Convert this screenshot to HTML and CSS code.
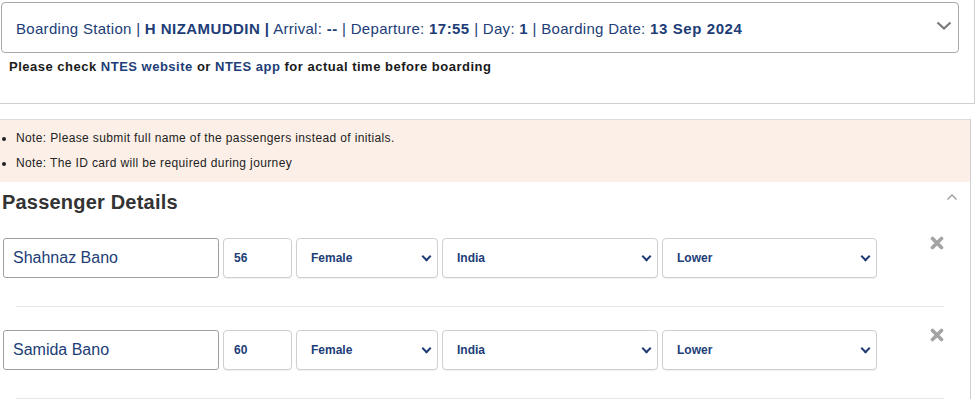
FILE: index.html
```html
<!DOCTYPE html>
<html>
<head>
<meta charset="utf-8">
<link rel="stylesheet" href="styles.css">
</head>
<body>
<div class="top">
  <div class="station-box">
    <div class="station-text">Boarding Station | <b>H NIZAMUDDIN |</b> Arrival: <b>--</b> | Departure: <b>17:55</b> | Day: <b>1</b> | Boarding Date: <b class="date">13 Sep 2024</b></div>
    <svg class="chev-down" width="16" height="10" viewBox="0 0 16 10"><path d="M1.5 1.5 L8 7.5 L14.5 1.5" fill="none" stroke="#7a7a7a" stroke-width="2.2"/></svg>
  </div>
  <div class="ntes">Please check <span class="link">NTES website</span> or <span class="link">NTES app</span> for actual time before boarding</div>
</div>

<div class="lower">
  <ul class="notes">
    <li>Note: Please submit full name of the passengers instead of initials.</li>
    <li>Note: The ID card will be required during journey</li>
  </ul>

  <div class="pd-head">
    <h2>Passenger Details</h2>
    <svg class="chev-up" width="12" height="8" viewBox="0 0 12 8"><path d="M1.5 6.5 L6 2 L10.5 6.5" fill="none" stroke="#9a9a9a" stroke-width="1.4"/></svg>
  </div>

  <div class="passenger">
    <div class="row">
      <input class="field name" value="Shahnaz Bano">
      <input class="field age" value="56">
      <div class="sel gender"><select class="field"><option>Female</option></select></div>
      <div class="sel nation"><select class="field"><option>India</option></select></div>
      <div class="sel berth"><select class="field"><option>Lower</option></select></div>
      <svg class="remove" width="14" height="14" viewBox="0 0 14 14"><path d="M2.5 2.5 L11.5 11.5 M11.5 2.5 L2.5 11.5" stroke="#a3a3a3" stroke-width="3.6" stroke-linecap="round"/></svg>
    </div>
    <div class="sep"></div>
  </div>

  <div class="passenger">
    <div class="row">
      <input class="field name" value="Samida Bano">
      <input class="field age" value="60">
      <div class="sel gender"><select class="field"><option>Female</option></select></div>
      <div class="sel nation"><select class="field"><option>India</option></select></div>
      <div class="sel berth"><select class="field"><option>Lower</option></select></div>
      <svg class="remove" width="14" height="14" viewBox="0 0 14 14"><path d="M2.5 2.5 L11.5 11.5 M11.5 2.5 L2.5 11.5" stroke="#a3a3a3" stroke-width="3.6" stroke-linecap="round"/></svg>
    </div>
    <div class="sep"></div>
  </div>
</div>
</body>
</html>
```
FILE: styles.css
```css
* { box-sizing: border-box; }
body {
  margin: 0;
  font-family: "Liberation Sans", Arial, sans-serif;
  background: #fff;
  color: #222;
}
.top {
  width: 975px;
  height: 104px;
  padding: 2px 15px 0 1px;
  border-right: 1px solid #cfcfcf;
  border-bottom: 1px solid #cfcfcf;
}
.station-box {
  height: 51px;
  border: 1px solid #a8a8a8;
  border-radius: 4px;
  display: flex;
  align-items: center;
  justify-content: space-between;
  padding: 0 6px 0 14px;
}
.station-text {
  font-size: 15px;
  letter-spacing: 0.3px;
  color: #213d77;
  padding-top: 1px;
}
.station-text b { font-weight: bold; letter-spacing: 0.45px; }
.station-text .date { letter-spacing: 0.6px; }
.chev-down { margin-top: -3px; }
.ntes {
  margin-top: 6px;
  padding-left: 8px;
  font-size: 13px;
  font-weight: bold;
  color: #1a1a1a;
  letter-spacing: 0.5px;
}
.ntes .link { color: #213d77; }

.lower {
  width: 971px;
  margin-top: 15px;
  border-right: 1px solid #cfcfcf;
}
.notes {
  margin: 0;
  padding: 6px 0 6px 16px;
  background: #fcefe7;
  border-top: 1px solid #dcdcdc;
  font-size: 12px;
  letter-spacing: 0.37px;
  color: #222;
}
.notes li {
  line-height: 25px;
}
.pd-head {
  display: flex;
  align-items: flex-start;
  justify-content: space-between;
  padding: 9px 12px 0 2px;
}
.pd-head h2 {
  margin: 0;
  font-size: 20px;
  line-height: 22px;
  letter-spacing: 0.2px;
  font-weight: bold;
  color: #333;
}
.chev-up { margin-top: 2px; }

.passenger { padding-top: 25px; }
.passenger + .passenger { padding-top: 23px; }
.row {
  display: flex;
  align-items: flex-start;
  gap: 4px;
  padding-left: 3px;
}
.field {
  height: 40px;
  border: 1px solid #cfcfcf;
  border-radius: 4px;
  background: #fff;
  color: #213d77;
  font-family: "Liberation Sans", Arial, sans-serif;
  font-size: 12px;
  font-weight: bold;
  box-shadow: 0 1px 1px rgba(0,0,0,0.06);
  outline: none;
}
.field.name {
  width: 216px;
  border-color: #a0a0a0;
  border-radius: 3px;
  font-size: 16px;
  font-weight: normal;
  padding: 0 9px;
  box-shadow: none;
}
.field.age {
  width: 69px;
  padding: 0 10px;
}
.sel { position: relative; }
.sel select {
  -webkit-appearance: none;
  appearance: none;
  width: 100%;
  padding: 0 14px;
}
.sel::after {
  content: "";
  position: absolute;
  right: 8px;
  top: 15px;
  width: 5px;
  height: 5px;
  border: solid #213d77;
  border-width: 0 2.5px 2.5px 0;
  transform: rotate(45deg);
  pointer-events: none;
}
.gender { width: 142px; }
.nation { width: 216px; }
.berth { width: 215px; }
.remove {
  margin-left: 49px;
  margin-top: -2px;
}
.sep {
  margin: 28px 26px 0 16px;
  border-top: 1px solid #e8e8e8;
}
```
